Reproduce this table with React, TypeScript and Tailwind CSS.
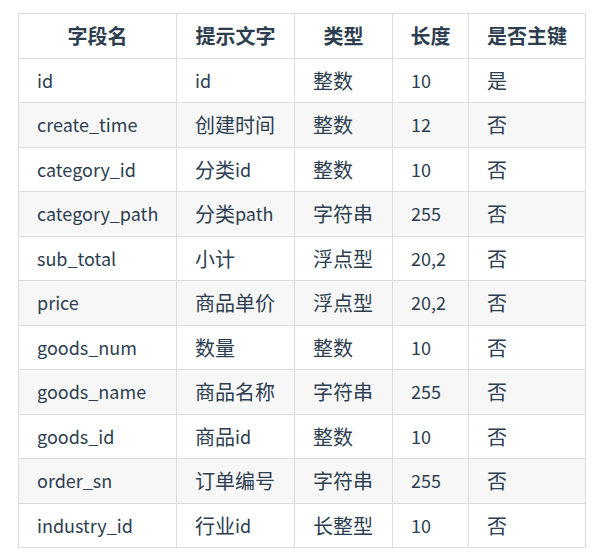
const columns = [
  { title: '字段名', width: 'w-[158px]' },
  { title: '提示文字', width: 'w-[118px]' },
  { title: '类型', width: 'w-[98px]' },
  { title: '长度', width: 'w-[76px]' },
  { title: '是否主键', width: 'w-[117px]' },
]

const rows = [
  ['id', 'id', '整数', '10', '是'],
  ['create_time', '创建时间', '整数', '12', '否'],
  ['category_id', '分类id', '整数', '10', '否'],
  ['category_path', '分类path', '字符串', '255', '否'],
  ['sub_total', '小计', '浮点型', '20,2', '否'],
  ['price', '商品单价', '浮点型', '20,2', '否'],
  ['goods_num', '数量', '整数', '10', '否'],
  ['goods_name', '商品名称', '字符串', '255', '否'],
  ['goods_id', '商品id', '整数', '10', '否'],
  ['order_sn', '订单编号', '字符串', '255', '否'],
  ['industry_id', '行业id', '长整型', '10', '否'],
]

// latin runs render a little smaller than the CJK glyphs
function Cell({ text }: { text: string }) {
  const parts = text.match(/[\u4e00-\u9fff]+|[^\u4e00-\u9fff]+/g) ?? []
  return (
    <>
      {parts.map((part, i) =>
        /[\u4e00-\u9fff]/.test(part) ? (
          <span key={i}>{part}</span>
        ) : (
          <span key={i} className="align-[1px] text-[18px]">
            {part}
          </span>
        ),
      )}
    </>
  )
}

export default function App() {
  return (
    <div className="min-h-[559px] bg-white pl-[18px] pt-[13px] font-['Noto_Sans_CJK_SC','Noto_Sans',sans-serif] text-[20px] text-[#2c3e50]">
      <table className="table-fixed border-collapse">
        <thead>
          <tr className="h-[45px]">
            {columns.map((col) => (
              <th
                key={col.title}
                className={`${col.width} border border-[#dddddd] text-center font-bold`}
              >
                {col.title}
              </th>
            ))}
          </tr>
        </thead>
        <tbody>
          {rows.map((row, i) => (
            <tr key={row[0]} className={`${i % 2 === 1 ? 'bg-[#f7f7f7]' : 'bg-white'} ${i % 2 === 0 ? 'h-[44px]' : 'h-[45px]'}`}>
              {row.map((cell, j) => (
                <td key={j} className="border border-[#dddddd] pl-[18px] text-left leading-none">
                  <Cell text={cell} />
                </td>
              ))}
            </tr>
          ))}
        </tbody>
      </table>
    </div>
  )
}
